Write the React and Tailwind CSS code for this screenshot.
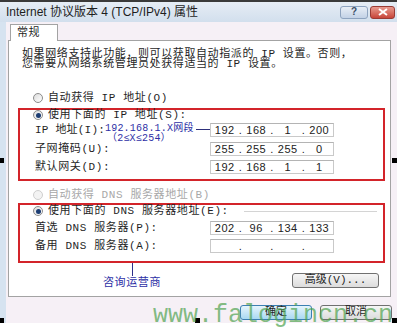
import React from "react";

const TXT = "font-['Liberation_Mono','Noto_Sans_CJK_SC',monospace] text-[11px] tracking-[0.6px] text-[#1f1f1f] whitespace-nowrap";

function Radio({ checked, disabled }) {
  return (
    <span
      className={`w-[10px] h-[10px] rounded-full border flex items-center justify-center shrink-0 ${
        disabled
          ? "border-[#cfcfcf] bg-[#f3f3f3]"
          : "border-[#8c8c8c] bg-linear-to-br from-[#dcdcdc] to-white"
      }`}
    >
      {checked && <span className="w-[5px] h-[5px] rounded-full bg-[#1c3d73]" />}
    </span>
  );
}

function IpField({ parts }) {
  return (
    <div className="w-[124px] h-[14px] shrink-0 border border-[#c9c9c9] border-t-[#b4b4b4] bg-white flex items-center font-['Liberation_Sans',sans-serif] text-[11px] leading-none text-[#222]">
      {parts.map((p, i) => (
        <React.Fragment key={i}>
          {i > 0 && <span className="w-[4px] text-center">.</span>}
          <span className="flex-1 text-center">{p}</span>
        </React.Fragment>
      ))}
    </div>
  );
}

function Btn({ children, primary, className = "" }) {
  return (
    <div
      className={`h-[15px] rounded-[3px] border flex items-center justify-center text-[11px] leading-none font-['Liberation_Mono','Noto_Sans_CJK_SC',monospace] text-[#1f1f1f] ${
        primary
          ? "border-[#3c7fb1] bg-linear-to-b from-[#e5f4fc] to-[#a9d9f2]"
          : "border-[#707070] bg-linear-to-b from-[#f6f6f6] to-[#dcdcdc]"
      } ${className}`}
    >
      {children}
    </div>
  );
}

export default function App() {
  return (
    <div className="w-[397px] h-[331px] bg-white relative overflow-hidden">
      <div className="h-[323px] flex flex-col">
        {/* title bar */}
        <div className="h-[22px] flex items-center pl-[6px] pr-[2px] border-t-2 border-[#3a3a3a] bg-linear-to-b from-[#e6edf5] to-[#d2dfed]">
          <span className="flex-1 text-[12px] text-[#1e1e1e] font-['Liberation_Sans','Noto_Sans_CJK_SC',sans-serif] whitespace-nowrap">
            Internet 协议版本 4 (TCP/IPv4) 属性
          </span>
          <div className="w-[28px] h-[13px] rounded-[3px] border border-[#8ea3bf] bg-linear-to-b from-[#e8eef6] to-[#c3d2e6] flex items-center justify-center text-[10px] font-bold text-[#3b4d66] font-['Liberation_Sans',sans-serif] leading-none">
            ?
          </div>
          <div className="ml-[2px] w-[25px] h-[13px] rounded-[3px] border border-[#9a3b34] bg-linear-to-b from-[#e79a8f] to-[#c7443a] flex items-center justify-center">
            <svg width="10" height="8" viewBox="0 0 10 8">
              <path d="M1 1 L9 7 M9 1 L1 7" stroke="white" strokeWidth="2" />
            </svg>
          </div>
        </div>

        <div className="flex-1 flex">
          <div className="w-[6px] bg-[#d6e3f0]" />
          <div className="flex-1 bg-[#f6f0f6] pl-[2px] pr-[6px] flex flex-col">
            {/* tab */}
            <div className="mt-[2px] h-[16px] flex">
              <div className={`ml-[2px] w-[48px] h-[17px] bg-white border border-b-0 border-[#a3a3a3] relative z-10 pl-[6px] flex items-center leading-none ${TXT}`}>
                常规
              </div>
            </div>

            {/* panel */}
            <div className="h-[257px] bg-white border border-[#a3a3a3] flex flex-col">
              <div className={`mt-[8px] pl-[13px] leading-[10px] ${TXT}`}>
                <div>如果网络支持此功能，则可以获取自动指派的 IP 设置。否则，</div>
                <div>您需要从网络系统管理员处获得适当的 IP 设置。</div>
              </div>

              <div className={`mt-[23px] h-[12px] pl-[24px] flex items-center gap-[5px] leading-none ${TXT}`}>
                <Radio />
                <span>自动获得 IP 地址(O)</span>
              </div>

              {/* red box 1 */}
              <div className="mt-[4px] ml-[9px] mr-[5px] border-2 border-[#d3242a] pb-[5px]">
                <div className={`h-[10px] pl-[13px] flex items-center gap-[5px] leading-none ${TXT}`}>
                  <Radio checked />
                  <span>使用下面的 IP 地址(S):</span>
                </div>
                <div className={`mt-[3px] h-[14px] pl-[15px] flex items-center leading-none ${TXT}`}>
                  <div className="w-[175px] shrink-0 h-full flex items-center">
                    <span className="shrink-0 tracking-[0.2px]">IP 地址(I):</span>
                    <div className="flex-1 min-w-0 self-start pt-[1px] flex flex-col text-[10px] leading-[10px] text-[#2d2fa6] tracking-[0.2px]">
                      <div className="flex items-center">
                        <span>192.168.1.X网段</span>
                        <span className="flex-1 ml-[2px] h-px bg-[#2d2f7a]" />
                      </div>
                      <span className="ml-[2px]">（2≤X≤254）</span>
                    </div>
                  </div>
                  <IpField parts={["192", "168", "1", "200"]} />
                </div>
                <div className={`mt-[5px] h-[14px] pl-[15px] flex items-center leading-none ${TXT}`}>
                  <span className="w-[175px] shrink-0">子网掩码(U):</span>
                  <IpField parts={["255", "255", "255", "0"]} />
                </div>
                <div className={`mt-[4px] h-[14px] pl-[15px] flex items-center leading-none ${TXT}`}>
                  <span className="w-[175px] shrink-0">默认网关(D):</span>
                  <IpField parts={["192", "168", "1", "1"]} />
                </div>
              </div>

              <div className={`mt-[8px] h-[12px] pl-[24px] flex items-center gap-[5px] leading-none ${TXT}`}>
                <Radio disabled />
                <span className="text-[#a8a8a8]">自动获得 DNS 服务器地址(B)</span>
              </div>

              {/* red box 2 */}
              <div className="mt-[2px] ml-[9px] mr-[5px] border-2 border-[#d3242a] pb-[8px]">
                <div className={`h-[12px] pl-[13px] pr-[6px] flex items-center gap-[5px] leading-none ${TXT}`}>
                  <Radio checked />
                  <span>使用下面的 DNS 服务器地址(E):</span>
                  <span className="flex-1 ml-[10px] h-px bg-[#d4d4d4]" />
                </div>
                <div className={`mt-[4px] h-[14px] pl-[15px] flex items-center leading-none ${TXT}`}>
                  <span className="w-[175px] shrink-0">首选 DNS 服务器(P):</span>
                  <IpField parts={["202", "96", "134", "133"]} />
                </div>
                <div className={`mt-[4px] h-[14px] pl-[15px] flex items-center leading-none ${TXT}`}>
                  <span className="w-[175px] shrink-0">备用 DNS 服务器(A):</span>
                  <IpField parts={["", "", "", ""]} />
                </div>
              </div>

              <div className="flex items-start">
                <div className="ml-[94px] flex flex-col items-center">
                  <span className="w-px h-[13px] bg-[#2d2f8a]" />
                  <span className={`leading-[14px] ${TXT} text-[#2d2fa6]`}>咨询运营商</span>
                </div>
                <Btn className="ml-auto mr-[11px] mt-[10px] w-[87px]">高级(V)...</Btn>
              </div>
            </div>

            {/* bottom buttons */}
            <div className="mt-[8px] flex justify-end gap-[8px]">
              <Btn primary className="w-[72px]">确定</Btn>
              <Btn className="w-[72px] mr-[-1px]">取消</Btn>
            </div>
          </div>
        </div>
      </div>

      {/* selection handles */}
      <span className="absolute left-0 top-[158px] w-[4px] h-[5px] bg-black" />
      <span className="absolute right-0 top-[158px] w-[5px] h-[5px] bg-black" />
      <span className="absolute left-0 top-[318px] w-[4px] h-[5px] bg-black" />
      <span className="absolute left-[195px] top-[318px] w-[5px] h-[5px] bg-black" />
      <span className="absolute right-0 top-[318px] w-[5px] h-[5px] bg-black" />

      {/* watermark */}
      <div className="absolute left-[153px] top-[303px] font-['Liberation_Mono',monospace] text-[25px] leading-[25px] text-[#4ea24e]/70 whitespace-nowrap">
        www.falogincn.cn
      </div>
    </div>
  );
}
